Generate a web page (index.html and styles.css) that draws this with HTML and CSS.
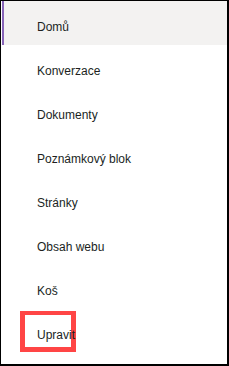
FILE: index.html
```html
<!DOCTYPE html>
<html lang="cs">
<head>
    <meta charset="UTF-8">
    <meta name="viewport" content="width=device-width, initial-scale=1.0">
    <title>Navigace webu</title>
    <link rel="stylesheet" href="styles.css">
</head>
<body>
    <nav class="site-nav">
        <ul class="nav-list">
            <li class="nav-item active"><span class="nav-label">Domů</span></li>
            <li class="nav-item"><span class="nav-label">Konverzace</span></li>
            <li class="nav-item"><span class="nav-label">Dokumenty</span></li>
            <li class="nav-item"><span class="nav-label">Poznámkový blok</span></li>
            <li class="nav-item"><span class="nav-label">Stránky</span></li>
            <li class="nav-item"><span class="nav-label">Obsah webu</span></li>
            <li class="nav-item"><span class="nav-label">Koš</span></li>
            <li class="nav-item"><span class="nav-label">Upravit</span></li>
        </ul>
        <!-- zvýraznění odkazu Upravit -->
        <div class="callout"></div>
    </nav>
</body>
</html>
```

FILE: styles.css
```css
* {
    box-sizing: border-box;
}
body {
    margin: 0;
    background-color: white;
    font-family: "Liberation Sans", Arial, sans-serif;
}
.site-nav {
    position: relative;
    width: 229px;
    height: 366px;
    border-top: 1px solid #000;
    border-left: 1px solid #000;
    border-right: 2px solid #000;
    border-bottom: 2px solid #000;
    padding-left: 1px;
    overflow: hidden;
}
.nav-list {
    list-style: none;
    margin: 0;
    padding: 0;
}
.nav-item {
    height: 44px;
    padding: 18px 0 10px 33px;
    border-left: 2px solid transparent;
    font-size: 12px;
    line-height: 16px;
    color: #201f1e;
    white-space: nowrap;
}
.nav-item.active {
    background-color: #f3f2f1;
    border-left-color: #8764b8;
}
.nav-label {
    position: relative;
    z-index: 1;
}
.callout {
    position: absolute;
    left: 19px;
    top: 310px;
    width: 56px;
    height: 41px;
    border: 5px solid #ff4545;
    border-top-width: 4px;
}
```
